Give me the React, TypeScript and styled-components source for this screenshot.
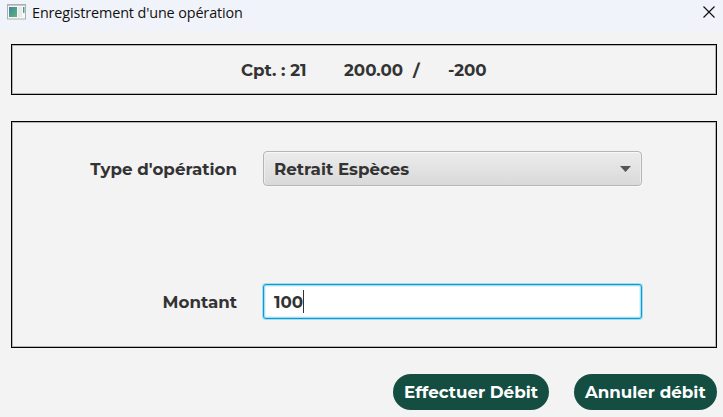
import React from "react";
import styled, { createGlobalStyle } from "styled-components";

const GlobalStyle = createGlobalStyle`
  * { box-sizing: border-box; }
  body { margin: 0; background: #f3f3f3; overflow: hidden; }
`;

const Window = styled.div`
  width: 723px;
  height: 417px;
  display: flex;
  flex-direction: column;
  background: #f3f3f3;
  color: #333;
  font: 700 16.7px/20px Montserrat, Inter, sans-serif;
  white-space: nowrap;
`;

const TitleBar = styled.header`
  height: 31px;
  flex: none;
  display: flex;
  align-items: flex-start;
  padding: 4px 7px 0 7px;
  background: #f0f3f9;
`;

const Title = styled.h1`
  margin: -1px auto 0 6px;
  color: #111;
  font: 400 14.4px/20px "Segoe UI", "Open Sans", sans-serif;
  letter-spacing: -0.12px;
`;

const CloseButton = styled.button`
  display: flex;
  margin-top: 1px;
  padding: 0;
  border: 0;
  background: none;
`;

const Content = styled.main`
  display: flex;
  flex-direction: column;
  padding: 13px 6px 0 11px;
`;

const Panel = styled.section`
  border: 1px solid #000;
  box-shadow: inset 0 0 0 1px #b4b4b4;
`;

const Summary = styled(Panel)`
  height: 51px;
  display: flex;
  align-items: center;
  padding-left: 229px;
`;

const Form = styled(Panel)`
  height: 227px;
  margin-top: 26px;
  padding: 29px 74px 0 0;
  display: grid;
  grid-template-columns: 225px 379px;
  grid-template-rows: 35px 35px;
  column-gap: 26px;
  row-gap: 98px;
`;

const Text = styled.span<{ $width?: number; $spacing?: number }>`
  flex: none;
  width: ${({ $width }) => ($width ? `${$width}px` : "auto")};
  letter-spacing: ${({ $spacing = 0 }) => $spacing}px;
`;

const Label = styled.label`
  display: flex;
  align-items: center;
  justify-content: flex-end;
`;

const Select = styled.div`
  display: flex;
  align-items: center;
  justify-content: space-between;
  padding: 0 10px 0 10px;
  border: 1px solid #b5b5b5;
  border-radius: 4px;
  background: linear-gradient(#ececec, #d9d9d9);
  box-shadow: inset 0 1px #f8f8f8, inset 1px 0 #eee, inset -1px 0 #eee, 0 1px #f8f8f8;
`;

const Field = styled.div`
  display: flex;
  align-items: center;
  padding-left: 10px;
  border: 1px solid #039ed3;
  border-radius: 3px;
  background: #fff;
  box-shadow: 0 0 0 1px #a9dcef, inset 0 0 0 1px #a9dcef, inset 0 0 0 2px #e3f4fb;
`;

const Caret = styled.i`
  width: 1px;
  height: 23px;
  margin-left: -0.5px;
  background: #333;
`;

const Actions = styled.footer`
  display: flex;
  justify-content: flex-end;
  gap: 25px;
  margin-top: 26px;
`;

const Button = styled.button<{ $width: number }>`
  width: ${({ $width }) => $width}px;
  height: 36px;
  display: flex;
  align-items: center;
  padding: 0 0 0 11px;
  border: 0;
  border-radius: 18px;
  color: #fff;
  background: #144d42;
  font: inherit;
`;

export default function App() {
  return (
    <Window>
      <GlobalStyle />
      <TitleBar>
        <svg width="19" height="16" viewBox="0 0 19 16">
          <defs>
            <linearGradient id="pane" x1="0" y1="0" x2="1" y2="1">
              <stop stopColor="#4380a5" />
              <stop offset="1" stopColor="#5eb776" />
            </linearGradient>
          </defs>
          <rect x=".5" y=".5" width="18" height="14.5" fill="#f7f7f7" stroke="#acafb2" />
          <path d="M1 1.5H18" stroke="#c5c9cc" />
          <rect x="2" y="3" width="8" height="10" fill="url(#pane)" />
          <rect x="11" y="3" width="4" height="10" fill="#e8ebeb" />
          <rect x="16" y="3" width="1.5" height="6" fill="url(#pane)" />
        </svg>
        <Title>Enregistrement d'une opération</Title>
        <CloseButton aria-label="Fermer">
          <svg width="14" height="14" viewBox="0 0 14 14">
            <path d="M1.5 1.5L12.5 12.5M12.5 1.5L1.5 12.5" stroke="#111" strokeWidth="1.15" />
          </svg>
        </CloseButton>
      </TitleBar>
      <Content>
        <Summary>
          <Text $width={103}>Cpt. : 21</Text>
          <Text $width={69}>200.00</Text>
          <Text $width={35}>/</Text>
          <Text>-200</Text>
        </Summary>
        <Form>
          <Label><Text>Type d'opération</Text></Label>
          <Select>
            <Text>Retrait Espèces</Text>
            <svg width="11" height="6" viewBox="0 0 11 6">
              <path d="M0 0H11L5.5 6Z" fill="#555" />
            </svg>
          </Select>
          <Label><Text>Montant</Text></Label>
          <Field>
            <Text>100</Text>
            <Caret />
          </Field>
        </Form>
        <Actions>
          <Button $width={156}><Text>Effectuer Débit</Text></Button>
          <Button $width={143}><Text>Annuler débit</Text></Button>
        </Actions>
      </Content>
    </Window>
  );
}
